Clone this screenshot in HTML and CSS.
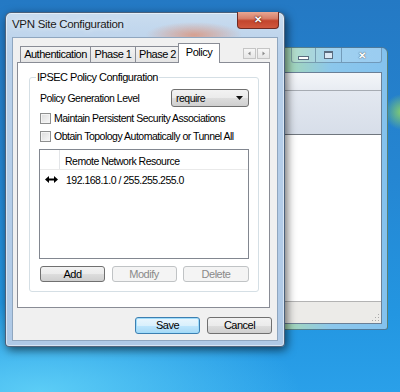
FILE: index.html
```html
<!DOCTYPE html>
<html lang="en">
<head>
    <meta charset="UTF-8">
    <title>VPN Site Configuration</title>
    <link rel="stylesheet" href="styles.css">
</head>
<body>

<div class="desktop">

    <!-- window behind the dialog -->
    <div class="bg-window">
        <div class="bg-caption">
            <span class="cap-btn cap-min"><i></i></span>
            <span class="cap-btn cap-max"><i></i></span>
            <span class="cap-btn cap-close">&#10005;</span>
        </div>
        <div class="bg-client">
            <div class="bg-toolbar"></div>
            <div class="bg-band"></div>
            <div class="bg-content"></div>
            <div class="bg-status"><span class="grip"></span></div>
        </div>
    </div>

    <div class="dialog">
        <div class="dlg-title">
            <span class="dlg-caption">VPN Site Configuration</span>
            <span class="dlg-close">&#10005;</span>
        </div>

        <div class="dlg-client">
            <div class="tabs">
                <span class="tab tab-auth">Authentication</span>
                <span class="tab tab-p1">Phase 1</span>
                <span class="tab tab-p2">Phase 2</span>
                <span class="tab tab-active">Policy</span>
                <span class="tab-scroll">
                    <span class="scroll-btn"><svg width="5" height="5" viewBox="0 0 5 5"><path d="M3.5 0.5 L1 2.5 L3.5 4.5 Z" fill="#8a8a8a"/></svg></span>
                    <span class="scroll-btn"><svg width="5" height="5" viewBox="0 0 5 5"><path d="M1.5 0.5 L4 2.5 L1.5 4.5 Z" fill="#8a8a8a"/></svg></span>
                </span>
            </div>

            <div class="tab-panel">
                <fieldset class="group">
                    <legend>IPSEC Policy Configuration</legend>

                    <div class="row">
                        <span>Policy Generation Level</span>
                        <span class="combo">
                            <span>require</span>
                            <svg width="7" height="4" viewBox="0 0 7 4"><path d="M0 0 H7 L3.5 4 Z" fill="#111"/></svg>
                        </span>
                    </div>
                    <div class="row check-row">
                        <span class="check"></span>
                        <span>Maintain Persistent Security Associations</span>
                    </div>
                    <div class="row check-row">
                        <span class="check"></span>
                        <span>Obtain Topology Automatically or Tunnel All</span>
                    </div>

                    <div class="listview">
                        <div class="lv-header">
                            <span class="lv-col-icon"></span>
                            <span class="lv-col-name">Remote Network Resource</span>
                        </div>
                        <div class="lv-row">
                            <span class="lv-col-icon">
                                <svg width="13" height="7" viewBox="0 0 13 7"><path d="M0 3.5 L4 0 V2.5 H9 V0 L13 3.5 L9 7 V4.5 H4 V7 Z" fill="#000"/></svg>
                            </span>
                            <span class="lv-col-name">192.168.1.0 / 255.255.255.0</span>
                        </div>
                    </div>

                    <div class="list-buttons">
                        <span class="btn">Add</span>
                        <span class="btn btn-disabled">Modify</span>
                        <span class="btn btn-disabled">Delete</span>
                    </div>
                </fieldset>
            </div>

            <div class="dlg-buttons">
                <span class="btn btn-default">Save</span>
                <span class="btn">Cancel</span>
            </div>
        </div>
    </div>

</div>

</body>
</html>
```

FILE: styles.css
```css
body {
    margin: 0;
    font-family: "Liberation Sans", Arial, sans-serif;
    font-size: 10.5px;
    letter-spacing: -0.5px;
    color: #000;
    overflow: hidden;
}
.desktop {
    position: relative;
    width: 400px;
    height: 392px;
    overflow: hidden;
    background:
        radial-gradient(circle at 402px 112px, #86cf6c 0, rgba(134, 207, 108, 0) 18px),
        radial-gradient(ellipse 260px 90px at 40px 392px, #5ccdf6 0%, rgba(92, 205, 246, 0) 100%),
        linear-gradient(180deg, #2479c4 0%, #2586d2 45%, #2396e1 80%, #2aa0e9 100%);
}

/* background window */
.bg-window {
    position: absolute;
    left: 200px;
    top: 47px;
    width: 188px;
    height: 283px;
    box-sizing: border-box;
    padding: 0 5px 5px 0;
    display: flex;
    flex-direction: column;
    border: 1px solid rgba(30, 60, 90, 0.55);
    border-radius: 6px 6px 3px 3px;
    background: linear-gradient(90deg, #9dd39a 0%, #a6d8b4 45%, #8cc7ec 70%, #84c2ee 100%);
}
.bg-caption {
    height: 24px;
    display: flex;
    justify-content: flex-end;
    align-items: flex-start;
}
.cap-btn {
    height: 15px;
    box-sizing: border-box;
    border: 1px solid rgba(60, 90, 120, 0.45);
    border-top: none;
    background: rgba(255, 255, 255, 0.18);
    display: flex;
    align-items: center;
    justify-content: center;
}
.cap-min { width: 25px; border-radius: 0 0 0 3px; }
.cap-max { width: 26px; border-left: none; }
.cap-close {
    width: 40px;
    margin-right: 0;
    border-left: none;
    border-radius: 0 0 3px 0;
    color: #fff;
    font-size: 10px;
    font-weight: bold;
    text-shadow: 0 0 1px #4b5d70, 0 0 1px #4b5d70;
}
.cap-min i {
    width: 9px;
    height: 2px;
    margin-top: 6px;
    border: 1px solid #5b6d80;
    background: #fff;
}
.cap-max i {
    width: 7px;
    height: 5px;
    border: 1px solid #5b6d80;
    border-top-width: 2px;
    background: #dbe8f4;
}
.bg-client {
    flex: 1;
    display: flex;
    flex-direction: column;
    border: 1px solid #6a7f96;
    background: #fff;
}
.bg-toolbar {
    height: 17px;
    border-bottom: 1px solid #a6abb2;
    background: linear-gradient(#f4f6f9, #e8ecf2);
}
.bg-band {
    height: 43px;
    border-bottom: 1px solid #70767e;
    background: linear-gradient(#e3e8f0, #d7dee9);
}
.bg-content {
    flex: 1;
    background: #fff;
}
.bg-status {
    height: 21px;
    border-top: 1px solid #b3b3b3;
    background: #ecebe8;
    position: relative;
}
.grip {
    position: absolute;
    right: 2px;
    bottom: 2px;
    width: 8px;
    height: 8px;
    background: radial-gradient(circle, #a9a9a9 0.8px, transparent 1px) 0 0 / 3px 3px;
    clip-path: polygon(100% 0, 100% 100%, 0 100%);
}

/* dialog */
.dialog {
    position: absolute;
    left: 5px;
    top: 12px;
    width: 280px;
    height: 335px;
    box-sizing: border-box;
    padding: 0 6px 6px 6px;
    border: 1px solid rgba(40, 60, 85, 0.75);
    border-radius: 6px 6px 4px 4px;
    background:
        radial-gradient(ellipse 48px 13px at 188px 22px, rgba(218, 150, 128, 0.85), rgba(218, 150, 128, 0)),
        linear-gradient(180deg, #c9dcef 0%, #b8d0ea 12%, #afc9e6 100%);
    box-shadow: 2px 3px 10px rgba(0, 0, 0, 0.6), inset 0 0 0 1px rgba(255, 255, 255, 0.5);
}
.dlg-title {
    height: 24px;
    display: flex;
    align-items: flex-start;
}
.dlg-caption {
    margin-top: 5px;
    font-size: 11.5px;
    letter-spacing: -0.3px;
    color: #1a1a1a;
    text-shadow: 0 0 6px #fff;
}
.dlg-close {
    margin-left: auto;
    margin-right: -1px;
    margin-top: -1px;
    width: 42px;
    height: 17px;
    box-sizing: border-box;
    border: 1px solid #6e2a22;
    border-top: none;
    border-radius: 0 0 4px 4px;
    background: linear-gradient(180deg, #e8a793 0%, #d8806a 40%, #c3452d 55%, #d0583e 100%);
    color: #fff;
    font-size: 10px;
    font-weight: bold;
    line-height: 16px;
    text-align: center;
    letter-spacing: 0;
    text-shadow: 0 0 2px #5a1a10, 0 0 1px #5a1a10;
}
.dlg-client {
    height: 304px;
    box-sizing: border-box;
    padding: 5px 5px 5px 4px;
    border: 1px solid #8fa6bf;
    background: #f0f0f0;
}

/* tabs */
.tabs {
    height: 19px;
    display: flex;
    align-items: flex-end;
    position: relative;
    z-index: 1;
}
.tab {
    height: 16px;
    box-sizing: border-box;
    border: 1px solid #898c95;
    border-bottom: none;
    margin-right: -1px;
    background: linear-gradient(#f3f3f3, #e4e4e4);
    text-align: center;
    line-height: 15px;
    font-size: 11px;
}
.tab-auth { width: 71px; margin-left: 3px; }
.tab-p1 { width: 46px; }
.tab-p2 { width: 45px; }
.tab-active {
    width: 42px;
    height: 20px;
    margin-left: -1px;
    margin-bottom: -1px;
    background: #fff;
    line-height: 17px;
}
.tab-scroll {
    margin-left: auto;
    margin-right: 2px;
    align-self: flex-start;
    margin-top: 5px;
    display: flex;
}
.scroll-btn {
    width: 13px;
    height: 11px;
    box-sizing: border-box;
    border: 1px solid #c5c5c5;
    background: linear-gradient(#f7f7f7, #e6e6e6);
    display: flex;
    align-items: center;
    justify-content: center;
    margin-left: 1px;
}
.tab-panel {
    height: 246px;
    box-sizing: border-box;
    margin-right: 2px;
    padding: 8px 10px 0 11px;
    border: 1px solid #898c95;
    background: #fff;
}

/* group box */
.group {
    margin: 0;
    padding: 6px 9px 9px 9px;
    border: 1px solid #d5dfe5;
    border-radius: 3px;
}
.group legend {
    margin-left: -3px;
    padding: 0 1px;
    line-height: 12px;
    font-size: 11px;
}
.row {
    height: 18px;
    display: flex;
    align-items: center;
    padding-left: 1px;
}
.combo {
    margin-left: auto;
    width: 78px;
    height: 18px;
    box-sizing: border-box;
    padding: 0 5px 0 4px;
    border: 1px solid #707070;
    border-radius: 3px;
    background: linear-gradient(#f2f2f2 0%, #ebebeb 50%, #dddddd 51%, #cfcfcf 100%);
    display: flex;
    align-items: center;
    justify-content: space-between;
}
.check-row {
    margin-top: 2px;
}
.check-row + .check-row {
    margin-top: 0;
}
.check {
    width: 11px;
    height: 11px;
    box-sizing: border-box;
    margin-right: 3px;
    border: 1px solid #8e8f8f;
    background: linear-gradient(135deg, #dcdcdc, #f8f8f8);
    box-shadow: inset 0 0 0 1px #f4f4f4;
}

/* list view */
.listview {
    margin-top: 4px;
    height: 110px;
    box-sizing: border-box;
    border: 1px solid #828790;
    background: #fff;
}
.lv-header {
    height: 19px;
    display: flex;
    border-bottom: 1px solid #eaeaea;
}
.lv-header .lv-col-icon {
    border-right: 1px solid #e3e5e8;
}
.lv-col-icon {
    width: 19px;
    display: flex;
    align-items: center;
    justify-content: center;
}
.lv-col-name {
    padding-left: 5px;
    display: flex;
    align-items: center;
}
.lv-header .lv-col-name {
    padding-top: 3px;
}
.lv-row {
    height: 17px;
    display: flex;
    margin-top: 1px;
}
.lv-row .lv-col-icon {
    padding-left: 2px;
}
.lv-row .lv-col-name {
    padding-left: 5px;
}

/* buttons */
.list-buttons {
    margin-top: 7px;
    padding-left: 1px;
    display: flex;
    justify-content: space-between;
}
.btn {
    width: 65px;
    height: 16px;
    box-sizing: border-box;
    border: 1px solid #707070;
    border-radius: 3px;
    background: linear-gradient(#f2f2f2 0%, #ebebeb 50%, #dddddd 51%, #cfcfcf 100%);
    text-align: center;
    line-height: 14px;
    font-size: 11px;
}
.btn-disabled {
    border-color: #c0c3c5;
    background: #f4f4f4;
    color: #8a8a8a;
}
.list-buttons .btn:last-child {
    width: 66px;
}
.dlg-buttons {
    margin-top: 9px;
    display: flex;
    justify-content: flex-end;
    gap: 7px;
}
.dlg-buttons .btn {
    height: 17px;
    line-height: 15px;
}
.btn-default {
    border-color: #3c7fb1;
    background: linear-gradient(#eaf6fd 0%, #d9f0fc 50%, #bee6fd 51%, #a7d9f5 100%);
    box-shadow: inset 0 0 0 1px #9fdcfb;
}
```
